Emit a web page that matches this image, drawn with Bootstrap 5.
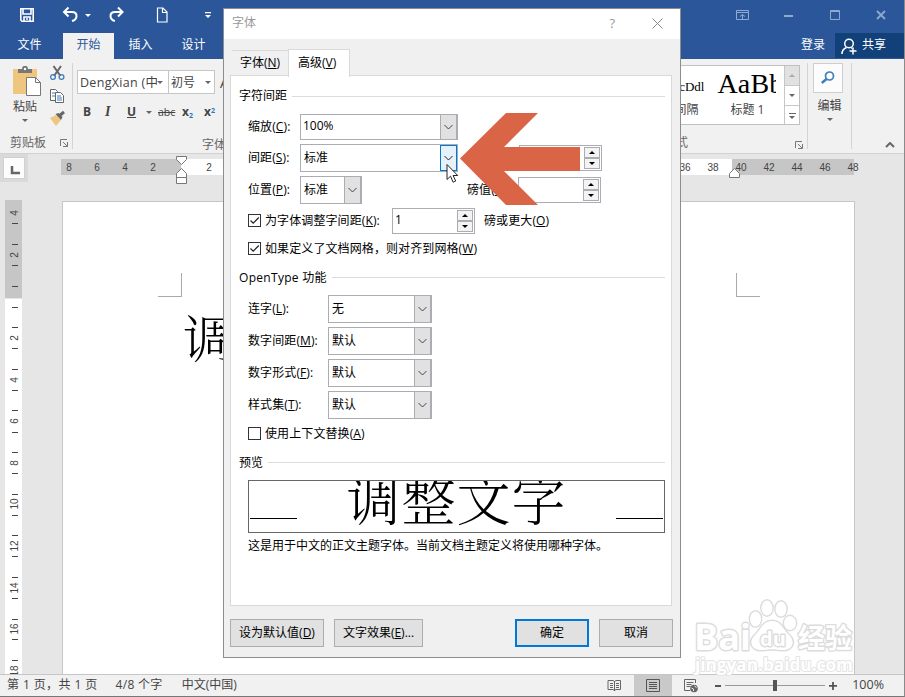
<!DOCTYPE html>
<html lang="zh-CN">
<head>
<meta charset="utf-8">
<meta name="viewport" content="width=device-width, initial-scale=1">
<title>Word - 字体</title>
<link href="https://cdn.jsdelivr.net/npm/bootstrap@5.3.0/dist/css/bootstrap.min.css" rel="stylesheet">
<style>
body{font-family:"Open Sans","Noto Sans CJK SC",sans-serif;font-size:12px;line-height:16px;color:#444;overflow:hidden;width:905px;height:697px}
svg{display:block;flex:none}
.app-win{width:905px;height:697px;background:#e6e6e6;border-right:1px solid #8a8a8a;border-bottom:1px solid #777}
.title-strip{height:33px;background:#2b579a;padding-left:18px;padding-bottom:3px}
.menu-strip{height:26px;background:#2b579a;color:#fff}
.menu-tab{width:53px;text-align:center;line-height:24px;height:26px}
.menu-tab.on{background:#f1f1f1;color:#2b579a;width:51px}
.share-btn{background:#124078;width:69px;height:25px;padding-left:6px;padding-bottom:2px}
.ribbon{height:95px;background:#f1f1f1;border-bottom:1px solid #d2d2d2}
.grp{height:86px;margin-top:4px;border-right:1px solid #d4d4d4}
.grp-name{color:#666;line-height:16px;position:relative;top:2px}
.paste-col{width:50px}
.fbox{height:24px;background:#fff;border:1px solid #c6c6c6;line-height:21px;padding-left:2px;overflow:hidden;white-space:nowrap}
.caret{width:0;height:0;border:3px solid transparent;border-top-color:#666;border-bottom:0;flex:none}
.fmt{height:20px;font-size:12px;font-weight:700;line-height:20px}
.fmt sub,.fmt sup{font-size:7px;color:#2e75b6;line-height:0}
.gallery{height:60px;border:1px solid #c0c0c0;background:#fff;width:122px;overflow:hidden}
.gal-btns{width:15px;border-left:1px solid #c6c6c6}
.gal-btns>div{height:20px;border-bottom:1px solid #c6c6c6}
.song{font-family:"Liberation Serif","Noto Serif CJK SC",serif;color:#000}
.ruler-row{height:46px}
.corner{width:28px;height:28px;background:#dadada;padding:3px}
.corner>div{width:22px;height:22px;background:#fcfcfc;border:1px solid #d0d0d0}
.hruler{width:812px;height:16px;margin:5px 0 0 27px;background:linear-gradient(90deg,transparent 6px,#c6c6c6 6px 126px,#fff 126px 677px,#c6c6c6 677px 799px,transparent 799px);font:10px/18px "Liberation Sans",sans-serif}
.hruler>span{width:28px;text-align:center}
.indent{left:175px;top:1px}
.indent-r{left:728px;top:13px}
.work{height:474px;overflow:hidden}
.paper{width:793px;height:473px;background:#fff;border:1px solid #c6c6c6;border-bottom:0;margin:1px 0 0 40px}
.cropmark{width:24px;height:24px;border:0 solid #aaa}
.doc-text{font-family:"Noto Serif CJK SC","Noto Sans CJK SC",serif;font-weight:300;font-size:51px;line-height:60px;color:#000;margin:9px 0 0 120px}
.status{height:22px;background:#f1f1f1;border-top:1px solid #c6c6c6;line-height:19px}
.view-on{width:38px;height:21px;background:#c9c9c9}
.dlg{left:223px;top:8px;width:458px;height:650px;background:#f0f0f0;border:1px solid #8d8d8d;color:#000}
.dlg-title{height:30px;background:#fff;color:#999;padding:6px 17px 0 8px}
.dlg-tabs{height:37px;padding-left:8px}
.dtab{width:57px;height:26px;border-top:1px solid #d9d9d9;line-height:24px;padding-left:8px}
.dtab.on{width:62px;height:28px;background:#fff;border:1px solid #d9d9d9;border-bottom:0;margin-bottom:-1px;margin-left:-1px;padding-left:9px;line-height:26px;position:relative;z-index:1}
.panel{width:442px;height:531px;margin-left:6px;margin-top:-1px;background:#fff;border:1px solid #d9d9d9;padding:5px 6px 0 17px}
.hd{margin-left:-9px}
.hd i{height:1px;background:#dcdcdc;flex:1;margin-left:5px}
.h30{height:30px}.h31{height:31px}.h26{height:26px}.h32{height:32px}
.lab{flex:none;white-space:nowrap;letter-spacing:.1px}
.w52{width:52px}.w80{width:80px}
.combo{border:1px solid #abadb3;background:#fff;height:28px;padding-left:3px;line-height:25px}
.combo.short{height:26px;line-height:22px;padding-left:2px}
.combo>b{width:17px;align-self:stretch;background:#e1e1e1;border:1px solid #abadb3;border-width:0 1px 0 1px;display:flex;align-items:center;justify-content:center}
.combo>b.hot{background:#e5f1fb;border:1px solid #0078d7}
.spin{border:1px solid #abadb3;height:26px;padding:1px;background:#fff;line-height:20px}
.spin>div{width:16px}
.spin>div>b{height:11px;border:1px solid #abadb3;background:#f3f3f3;display:flex;align-items:center;justify-content:center}
.up{width:0;height:0;border:3px solid transparent;border-bottom-color:#000;border-top:0}
.dn{width:0;height:0;border:3px solid transparent;border-top-color:#000;border-bottom:0}
.chk{width:13px;height:13px;border:1px solid #333;background:#fff;margin:0 4px 1px 0;flex:none}
.w158{width:158px}.w62{width:62px}.w104{width:104px}.w83{width:83px}
.preview{height:53px;width:417px;border:1px solid #666;margin-top:2px;overflow:hidden;padding:0 1px}
.preview hr{width:47px;margin:37px 0 0;border-top:1px solid #000;opacity:1}
.preview span{font-family:"Noto Serif CJK SC","Noto Sans CJK SC",serif;font-weight:300;font-size:54px;line-height:54px;margin-top:-10px;letter-spacing:1px}
.dlg-btns{padding:13px 7px 0 6px}
.dbtn{height:28px;border:1px solid #adadad;background:#e1e1e1;text-align:center;line-height:26px}
.dbtn.def{border:2px solid #0078d7;line-height:24px}
.dw94{width:94px}.dw89{width:89px}.dw74{width:74px}
.arrow-mark{left:459px;top:112px}
.cursor-mark{left:446px;top:163px}
.wm{left:690px;top:592px}
</style>
<script src="https://cdn.jsdelivr.net/npm/bootstrap@5.3.0/dist/js/bootstrap.bundle.min.js"></script>
</head>
<body>
<div class="app-win d-flex flex-column position-relative">
  <div class="title-strip d-flex align-items-center">
    <svg width="18" height="18" viewBox="0 0 18 18" fill="none" stroke="#fff" stroke-width="1.6"><path d="M2.8 2.8h12.4v12.4H4L2.8 14zM5 3v5h8V3M6 15v-4h6v4M8 13h2"/></svg>
    <svg class="ms-4" width="22" height="18" viewBox="0 0 22 18" fill="none" stroke="#fff" stroke-width="2"><path d="M8.500 1.500L4 6l4.500 4.500M4 6h8c6 0 6 7.500 0 9"/></svg>
    <span class="caret" style="border-top-color:#fff;margin-left:3px"></span>
    <svg class="ms-3" width="20" height="18" viewBox="0 0 20 18" fill="none" stroke="#fff" stroke-width="2"><path d="M11 1.500L15.500 6 11 10.500M15.500 6H8c-6 0-6 7.500 0 9"/></svg>
    <svg style="margin-left:23px" width="24" height="18" viewBox="0 0 24 18" fill="none" stroke="#fff" stroke-width="1.200"><path d="M7.500 2h5.500l4 4v10H7.500zM12.500 2v4.500H17"/></svg>
    <svg style="margin-left:19px" width="24" height="18" viewBox="0 0 24 18" fill="#fff"><path d="M12 6h6v1.300h-6zM12 9h6l-3 3z"/></svg>
    <svg class="ms-auto" width="14" height="12" viewBox="0 0 14 12" fill="none" stroke="#8fa9cf"><path d="M.5 1.500h12v9H.5zM.5 3.500h12M6.500 10V5.500M4 7.500l2.500-2 2.500 2"/></svg>
    <svg width="154" height="12" viewBox="0 0 154 12" fill="none" stroke="#8fa9cf"><path d="M34 7h9" stroke-width="2"/><path d="M80.500 1.500h9v9h-9zM80 2.500h10"/><path d="M127 2l8 8m0-8l-8 8" stroke-width="1.800"/></svg>
  </div>
  <div class="menu-strip d-flex">
    <div class="menu-tab" style="margin:0 7px 0 3px">文件</div><div class="menu-tab on">开始</div>
    <div class="menu-tab">插入</div><div class="menu-tab">设计</div>
    <div class="ms-auto me-2" style="line-height:23px;padding-right:2px">登录</div>
    <div class="share-btn d-flex align-items-center gap-1">
      <svg class="mt-1" width="17" height="17" viewBox="0 0 17 17" fill="none" stroke="#fff" stroke-width="1.500"><circle cx="8" cy="5.500" r="4.300"/><path d="M1 16c0-3.500 2-5.500 4.500-6.500M10 9.500l1 .8M8.500 13h7M12 9.500v7"/></svg><span>共享</span></div>
  </div>
  <div class="ribbon d-flex">
    <div class="grp d-flex flex-column" style="width:73px">
      <div class="d-flex">
        <div class="paste-col d-flex flex-column align-items-center">
          <svg style="margin:3px 0 0 3px" width="30" height="32" viewBox="0 0 30 32"><path fill="#eec67d" d="M1 3h24v25H1z"/><path fill="#777" d="M6 7V3h4c0-4.500 6-4.500 6 0h4v4z"/><circle cx="13" cy="3" r="1.200" fill="#fff"/><path d="M14.500 11.500h9l5 5v13h-14z" fill="#fff" stroke="#777"/><path d="M23.500 11.500v5h5" fill="none" stroke="#777"/></svg>
          <span style="margin-top:1px">粘贴</span><i class="caret mt-1"></i>
        </div>
        <svg width="20" height="64" viewBox="0 0 20 64" fill="none"><path d="M3.500 3l7 10M11 3L4 13" stroke="#666" stroke-width="2"/><circle cx="3" cy="14" r="2.400" stroke="#3f7dbd" stroke-width="1.300"/><circle cx="11.500" cy="14" r="2.400" stroke="#3f7dbd" stroke-width="1.300"/><path d="M.5 26.500h5l2 2v9h-7z" fill="#fff" stroke="#666"/><path d="M5.500 29.500h5l3 3v7h-8z" fill="#fff" stroke="#666"/><path d="M2 30h3M2 33h3M7 33h4M7 35h5M7 37h5" stroke="#3f7dbd"/><path d="M0 55l6-3 5 5-5 6z" fill="#eec67d"/><path d="M5.500 51l3-1 4 4-1.500 3z" fill="#666"/><path d="M9 53l5-4" stroke="#666" stroke-width="3"/></svg>
      </div>
      <div class="grp-name d-flex mt-auto"><span style="padding-left:10px">剪贴板</span>
        <svg class="ms-auto me-1" width="8" height="14" viewBox="0 0 8 14" fill="none" stroke="#777"><path d="M.5 11V4.500H7M3 7l4 4M7.500 7v4.500H3"/></svg></div>
    </div>
    <div class="d-flex flex-column" style="width:156px;padding:11px 0 0 4px">
      <div class="d-flex">
        <div class="fbox d-flex align-items-center" style="width:92px"><span class="overflow-hidden" style="width:77px;font-size:12.500px;letter-spacing:.3px">DengXian (中</span><i class="caret"></i></div>
        <div class="fbox d-flex align-items-center border-start-0" style="width:46px"><span>初号</span><i class="caret" style="margin-left:10px"></i></div>
        <span style="padding-left:5px;line-height:26px;font-size:14px">A</span>
      </div>
      <div class="d-flex fmt" style="padding:6px 0 0 6px">
        <span style="width:22px">B</span><span style="width:22px;font-style:italic;font-family:'Liberation Serif';font-size:14px">I</span><span class="text-decoration-underline" style="width:19px">U</span><i class="caret" style="margin-top:9px;margin-right:6px"></i><s class="fw-normal" style="width:24px;font-size:10.500px">abc</s><span style="width:22px">x<sub>2</sub></span><span>x<sup>2</sup></span>
      </div>
      <div class="grp-name" style="padding-left:125px;margin-top:19px">字体</div>
    </div>
    <div class="grp d-flex flex-column ms-auto" style="width:130px">
      <div class="gallery d-flex" style="margin-top:2px">
        <div style="width:33px;direction:rtl" class="overflow-hidden text-nowrap pt-2"><div class="song" style="font-size:13px;line-height:25px;direction:ltr;margin-right:7px;text-align:right">cDdl</div><div style="margin:3px 13px 0 0;direction:ltr;display:flex;justify-content:end">间隔</div></div>
        <div style="width:74px;padding-left:4px" class="overflow-hidden text-nowrap"><div class="song overflow-hidden" style="font-size:28px;line-height:36px;letter-spacing:.2px;width:59px;margin-left:2px">AaBb</div><div style="padding-left:15px">标题 1</div></div>
        <div class="gal-btns">
          <div class="d-flex align-items-center justify-content-center" style="background:#e1e1e1"><i class="up" style="border-bottom-color:#aaa"></i></div>
          <div class="d-flex align-items-center justify-content-center"><i class="caret"></i></div>
          <div class="d-flex flex-column align-items-center justify-content-center"><i style="width:7px;height:1px;background:#666;margin-bottom:2px"></i><i class="caret"></i></div>
        </div>
      </div>
      <div class="grp-name d-flex mt-auto"><span style="margin-left:-2px">式</span><svg class="ms-auto" style="margin-right:4px;margin-top:2px" width="8" height="14" viewBox="0 0 8 14" fill="none" stroke="#777"><path d="M.5 11V4.500H7M3 7l4 4M7.500 7v4.500H3"/></svg></div>
    </div>
    <div class="grp d-flex flex-column align-items-center" style="width:44px">
      <div style="width:30px;height:30px;border:1px solid #cfcfcf;background:#fcfcfc;padding:7px" class="me-1"><svg width="14" height="13" viewBox="0 0 14 13" fill="none" stroke="#3f7dbd"><circle cx="8.500" cy="5" r="4" stroke-width="1.700"/><path d="M5.500 8L.8 12" stroke-width="2.400"/></svg></div>
      <span style="margin-top:5px">编辑</span><i class="caret mt-1"></i>
    </div>
    <div style="width:52px" class="d-flex align-items-end justify-content-center pb-1"><svg style="margin:0 0 1px 23px" width="10" height="6" viewBox="0 0 10 6" fill="none" stroke="#666" stroke-width="2"><path d="M1 5l4-4 4 4"/></svg></div>
  </div>
  <div class="ruler-row d-flex position-relative">
    <div class="corner"><div><svg width="20" height="20" viewBox="0 0 20 20"><path d="M8 8v7h8" fill="none" stroke="#666" stroke-width="2.500"/></svg></div></div>
    <div class="hruler d-flex">
      <span>8</span><span>6</span><span>4</span><span>2</span><span></span><span>2</span><span></span><span></span><span></span><span></span><span></span><span></span><span></span><span></span><span></span><span></span><span></span><span></span><span></span><span></span><span></span><span></span><span>36</span><span>38</span><span>40</span><span>42</span><span>44</span><span>46</span><span>48</span>
    </div>
    <svg class="indent position-absolute" width="13" height="29" viewBox="0 0 13 29" fill="#fff" stroke="#777"><path d="M1.500 1.500h10v3l-5 5-5-5zM6.500 13.500l5 5v10h-10v-10zM1.500 22.500h10"/></svg>
    <svg class="indent-r position-absolute" width="13" height="13" viewBox="0 0 13 13" fill="#fff" stroke="#777"><path d="M6.500 1.500l5 5v4h-10v-4z"/></svg>
  </div>
  <div class="work d-flex">
    <svg style="margin-left:5px" width="17" height="474" viewBox="0 200 17 474">
      <path fill="#c6c6c6" d="M0 200h17v98H0z"/><path fill="#fff" d="M0 299h17v375H0z"/>
      <path stroke="#444" d="M7 223.500h6M7 244.500h6M7 265.500h6M7 286.500h6M7 307.500h6M7 327.500h6M7 348.500h6M7 369.500h6M7 390.500h6M7 410.500h6M7 432.500h6M7 452.500h6M7 473.500h6M7 494.500h6M7 515.500h6M7 535.500h6M7 556.500h6M7 577.500h6M7 598.500h6M7 619.500h6M7 639.500h6M7 660.500h6"/>
      <g font-family="Liberation Sans" font-size="10" fill="#444" text-anchor="middle">
        <text transform="translate(13 213) rotate(-90)">4</text><text transform="translate(13 255) rotate(-90)">2</text><text transform="translate(13 338) rotate(-90)">2</text><text transform="translate(13 380) rotate(-90)">4</text><text transform="translate(13 421) rotate(-90)">6</text><text transform="translate(13 463) rotate(-90)">8</text><text transform="translate(13 504) rotate(-90)">10</text><text transform="translate(13 546) rotate(-90)">12</text><text transform="translate(13 588) rotate(-90)">14</text><text transform="translate(13 629) rotate(-90)">16</text><text transform="translate(13 671) rotate(-90)">18</text>
      </g>
    </svg>
    <div class="paper">
      <div class="d-flex" style="padding-top:71px"><div class="cropmark" style="margin-left:95px;border-width:0 1px 1px 0"></div><div class="cropmark" style="margin-left:554px;border-width:0 0 1px 1px"></div></div>
      <div class="doc-text">调</div>
    </div>
  </div>
  <div class="status d-flex">
    <span style="margin-left:7px;letter-spacing:.4px">第 1 页，共 1 页</span><span style="margin-left:18px;letter-spacing:.3px">4/8 个字</span><span style="margin-left:19px">中文(中国)</span>
    <div class="ms-auto d-flex align-items-center">
      <svg style="margin-right:12px" width="15" height="13" viewBox="0 0 15 13" fill="none" stroke="#666"><path d="M1 1.500h5l1.500 1L9 1.500h4.500v9H9l-1.500 1-1.500-1H1zM7.500 2v10M3 4.500h3M3 6.500h3M3 8.500h3M9 4.500h3M9 6.500h3M9 8.500h3"/></svg>
      <div class="view-on d-flex align-items-center justify-content-center"><svg width="14" height="13" viewBox="0 0 14 13" fill="none" stroke="#555"><path d="M.5.5h13v12H.5zM3 3.500h8M3 5.500h8M3 7.500h8M3 9.500h8"/></svg></div>
      <svg style="margin-left:12px" width="14" height="14" viewBox="0 0 14 14" fill="none" stroke="#666"><path d="M11.500 4V.500H.5v11H6M2.500 3.500h7M2.500 5.500h5M2.500 7.500h4"/><circle cx="10" cy="9.500" r="3.800" fill="#666" stroke="none"/><path d="M7.500 9l2 1v2M10.500 7l2 1.500" stroke="#eee"/></svg>
      <svg style="margin-left:16px;margin-right:14px" width="124" height="13" viewBox="0 0 124 13"><path fill="#555" d="M1 6h6v2H1zM115 6h8v1.800h-8zM118.100 3h1.800v8h-1.800z"/><path fill="#999" d="M11 6h100v1H11z"/><path fill="#555" d="M59 1h4v11h-4z"/></svg>
      <span style="margin-right:20px;font-size:12.500px;margin-bottom:2px">100%</span>
    </div>
  </div>

  <div class="dlg position-absolute">
    <div class="dlg-title d-flex"><span>字体</span><span class="ms-auto" style="margin-right:37px;font-size:13px">?</span>
      <svg style="margin-top:3px" width="11" height="11" viewBox="0 0 11 11" stroke="#888"><path d="M.5.5l10 10m0-10l-10 10"/></svg></div>
    <div class="dlg-tabs d-flex align-items-end"><div class="dtab">字体(<u>N</u>)</div><div class="dtab on">高级(<u>V</u>)</div></div>
    <div class="panel">
      <div class="hd h30 d-flex align-items-center">字符间距<i></i></div>
      <div class="h31 d-flex align-items-center"><span class="lab w52">缩放(<u>C</u>):</span><div class="combo short w158 d-flex justify-content-between">100%<b><svg width="9" height="6" viewBox="0 0 9 6" fill="none" stroke="#444"><path d="M.5 1l4 4 4-4"/></svg></b></div></div>
      <div class="h32 d-flex align-items-center"><span class="lab w52">间距(<u>S</u>):</span><div class="combo w158 d-flex justify-content-between">标准<b class="hot"><svg width="9" height="6" viewBox="0 0 9 6" fill="none" stroke="#222"><path d="M.5 1l4 4 4-4"/></svg></b></div>
        <div class="spin w83 d-flex justify-content-end" style="margin-left:61px"><div><b><i class="up"></i></b><b><i class="dn"></i></b></div></div></div>
      <div class="h32 d-flex align-items-center"><span class="lab w52">位置(<u>P</u>):</span><div class="combo w62 d-flex justify-content-between">标准<b><svg width="9" height="6" viewBox="0 0 9 6" fill="none" stroke="#444"><path d="M.5 1l4 4 4-4"/></svg></b></div>
        <span class="lab" style="margin-left:105px;width:51px">磅值(<u>Y</u>):</span><div class="spin w83 d-flex justify-content-end"><div><b><i class="up"></i></b><b><i class="dn"></i></b></div></div></div>
      <div class="h30 d-flex align-items-center"><span class="chk"><svg width="11" height="11" viewBox="0 0 11 11" fill="none" stroke="#222" stroke-width="1.200"><path d="M1.500 5.500l2.700 2.700L9.800 2.500"/></svg></span><span class="lab" style="width:127px">为字体调整字间距(<u>K</u>):</span><div class="spin w83 d-flex justify-content-between"><span style="padding-left:1px">1</span><div><b><i class="up"></i></b><b><i class="dn"></i></b></div></div><span class="lab" style="margin-left:9px">磅或更大(<u>O</u>)</span></div>
      <div class="h26 d-flex align-items-center"><span class="chk"><svg width="11" height="11" viewBox="0 0 11 11" fill="none" stroke="#222" stroke-width="1.200"><path d="M1.500 5.500l2.700 2.700L9.800 2.500"/></svg></span><span class="lab">如果定义了文档网格，则对齐到网格(<u>W</u>)</span></div>
      <div class="hd h31 d-flex align-items-center"><span style="letter-spacing:.3px">OpenType 功能</span><i></i></div>
      <div class="h32 d-flex align-items-center"><span class="lab w80">连字(<u>L</u>):</span><div class="combo w104 d-flex justify-content-between">无<b><svg width="9" height="6" viewBox="0 0 9 6" fill="none" stroke="#444"><path d="M.5 1l4 4 4-4"/></svg></b></div></div>
      <div class="h32 d-flex align-items-center"><span class="lab w80">数字间距(<u>M</u>):</span><div class="combo w104 d-flex justify-content-between">默认<b><svg width="9" height="6" viewBox="0 0 9 6" fill="none" stroke="#444"><path d="M.5 1l4 4 4-4"/></svg></b></div></div>
      <div class="h32 d-flex align-items-center"><span class="lab w80">数字形式(<u>F</u>):</span><div class="combo w104 d-flex justify-content-between">默认<b><svg width="9" height="6" viewBox="0 0 9 6" fill="none" stroke="#444"><path d="M.5 1l4 4 4-4"/></svg></b></div></div>
      <div class="h32 d-flex align-items-center"><span class="lab w80">样式集(<u>T</u>):</span><div class="combo w104 d-flex justify-content-between">默认<b><svg width="9" height="6" viewBox="0 0 9 6" fill="none" stroke="#444"><path d="M.5 1l4 4 4-4"/></svg></b></div></div>
      <div class="h26 d-flex align-items-center"><span class="chk"></span><span class="lab">使用上下文替换(<u>A</u>)</span></div>
      <div class="hd h31 d-flex align-items-center">预览<i></i></div>
      <div class="preview d-flex justify-content-between"><hr><span>调整文字</span><hr></div>
      <div class="h26 d-flex align-items-center">这是用于中文的正文主题字体。当前文档主题定义将使用哪种字体。</div>
    </div>
    <div class="dlg-btns d-flex"><div class="dbtn dw94">设为默认值(<u>D</u>)</div><div class="dbtn dw89" style="margin-left:10px">文字效果(<u>E</u>)...</div><div class="dbtn def dw74 ms-auto">确定</div><div class="dbtn dw74" style="margin-left:10px">取消</div></div>
  </div>

  <svg class="arrow-mark position-absolute" width="126" height="94" viewBox="459 112 126 94"><path fill="#fff" d="M580 148h4v22h-4z"/><path fill="#d96446" d="M460 158.500L506 113h32l-34 34h76v24h-76l34 34h-32z"/></svg>
  <svg class="cursor-mark position-absolute" width="13" height="21" viewBox="0 0 13 21"><path d="M1 1.500v15l3.500-3.300 2.600 6 2.600-1.200-2.600-5.500h4.600z" fill="#fff" stroke="#222"/></svg>
  <svg class="wm position-absolute" width="168" height="88" viewBox="690 592 168 88" fill="#fff" stroke="#dcdcdc" stroke-width="2.800" paint-order="stroke" stroke-linejoin="round">
    <ellipse cx="755.500" cy="619" rx="5.500" ry="7.500"/><ellipse cx="767" cy="608" rx="5.500" ry="7.500"/><ellipse cx="781" cy="609" rx="5.500" ry="7.500"/><ellipse cx="790" cy="623" rx="6" ry="7"/>
    <path d="M772 621c9 0 11 8 16 13 9 8 4 17-7 16-7-1-11-1-18 0-11 1-16-8-7-16 5-5 7-13 16-13z"/>
    <g font-family="Open Sans,Noto Sans CJK SC,sans-serif" font-weight="700"><text x="694" y="650" font-size="36" textLength="57" lengthAdjust="spacingAndGlyphs">Bai</text><text x="760" y="646" font-size="20">du</text><text x="798" y="648" font-size="27">经验</text><text x="695" y="671" font-size="17" stroke="#e4e4e4" stroke-width="2" textLength="158" lengthAdjust="spacingAndGlyphs">jingyan.baidu.com</text></g>
  </svg>
</div>
</body>
</html>
